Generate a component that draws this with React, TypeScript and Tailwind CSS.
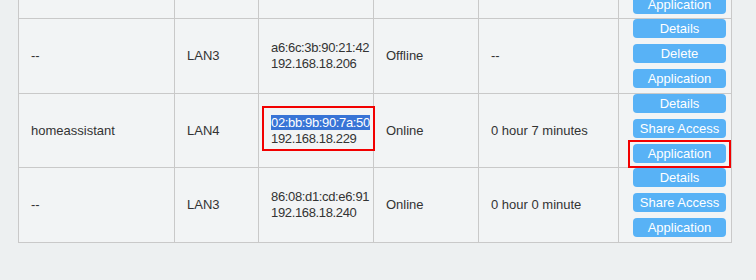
import React from "react";

type Row = {
    name: string;
    port: string;
    mac: string;
    ip: string;
    status: string;
    online: string;
    actions: string[];
    height: string;
    selected?: boolean;
};

const rows: Row[] = [
    { name: "--", port: "LAN3", mac: "a6:6c:3b:90:21:42", ip: "192.168.18.206", status: "Offline", online: "--", actions: ["Details", "Delete", "Application"], height: "h-[75px]" },
    { name: "homeassistant", port: "LAN4", mac: "02:bb:9b:90:7a:50", ip: "192.168.18.229", status: "Online", online: "0 hour 7 minutes", actions: ["Details", "Share Access", "Application"], height: "h-[74px]", selected: true },
    { name: "--", port: "LAN3", mac: "86:08:d1:cd:e6:91", ip: "192.168.18.240", status: "Online", online: "0 hour 0 minute", actions: ["Details", "Share Access", "Application"], height: "h-[75px]" },
];

const grid = "grid grid-cols-[156px_84px_115px_105px_140px_112px] border-b border-[#c9c9c9]";
const cell = "flex items-center pl-[12px] border-r border-[#c9c9c9]";
const btn = "h-[19px] w-[93px] rounded-[4px] bg-[#58b2f6] text-[13px] leading-[19px] text-white";

export default function App() {
    return (
        <div
            className="relative h-[280px] w-[756px] overflow-hidden bg-[#edf0f1] text-[13px] text-[#333333]"
            style={{ fontFamily: '"Liberation Sans", Arial, sans-serif' }}
        >
            <div className="ml-[18px] w-[714px] border-x border-[#c9c9c9] bg-[#f2f4f5]">
                {/* row cut off at the top, only the bottom of its last button shows */}
                <div className={`${grid} h-[19px]`}>
                    <div className="border-r border-[#c9c9c9]" />
                    <div className="border-r border-[#c9c9c9]" />
                    <div className="border-r border-[#c9c9c9]" />
                    <div className="border-r border-[#c9c9c9]" />
                    <div className="border-r border-[#c9c9c9]" />
                    <div className="flex flex-col pl-[14px]">
                        <button className={`${btn} -mt-[5px]`}>Application</button>
                    </div>
                </div>

                {rows.map((row, i) => (
                    <div key={i} className={`${grid} ${row.height}`}>
                        <div className={cell}>{row.name}</div>
                        <div className={cell}>{row.port}</div>
                        <div className={cell}>
                            <div className="leading-[16px] tracking-[-0.35px]">
                                <div>
                                    {row.selected ? (
                                        <span className="bg-[#3874d6] text-white">{row.mac}</span>
                                    ) : (
                                        row.mac
                                    )}
                                </div>
                                <div>{row.ip}</div>
                            </div>
                        </div>
                        <div className={cell}>{row.status}</div>
                        <div className={cell}>{row.online}</div>
                        <div className="flex flex-col gap-[6px] pl-[14px]">
                            {row.actions.map(a => (
                                <button key={a} className={btn}>
                                    {a}
                                </button>
                            ))}
                        </div>
                    </div>
                ))}
            </div>

            {/* annotation boxes */}
            <div className="absolute left-[262px] top-[106px] h-[45px] w-[113px] border-2 border-[#f20000]" />
            <div className="absolute left-[628px] top-[140px] h-[28px] w-[103px] border-2 border-[#f20000]" />
        </div>
    );
}
